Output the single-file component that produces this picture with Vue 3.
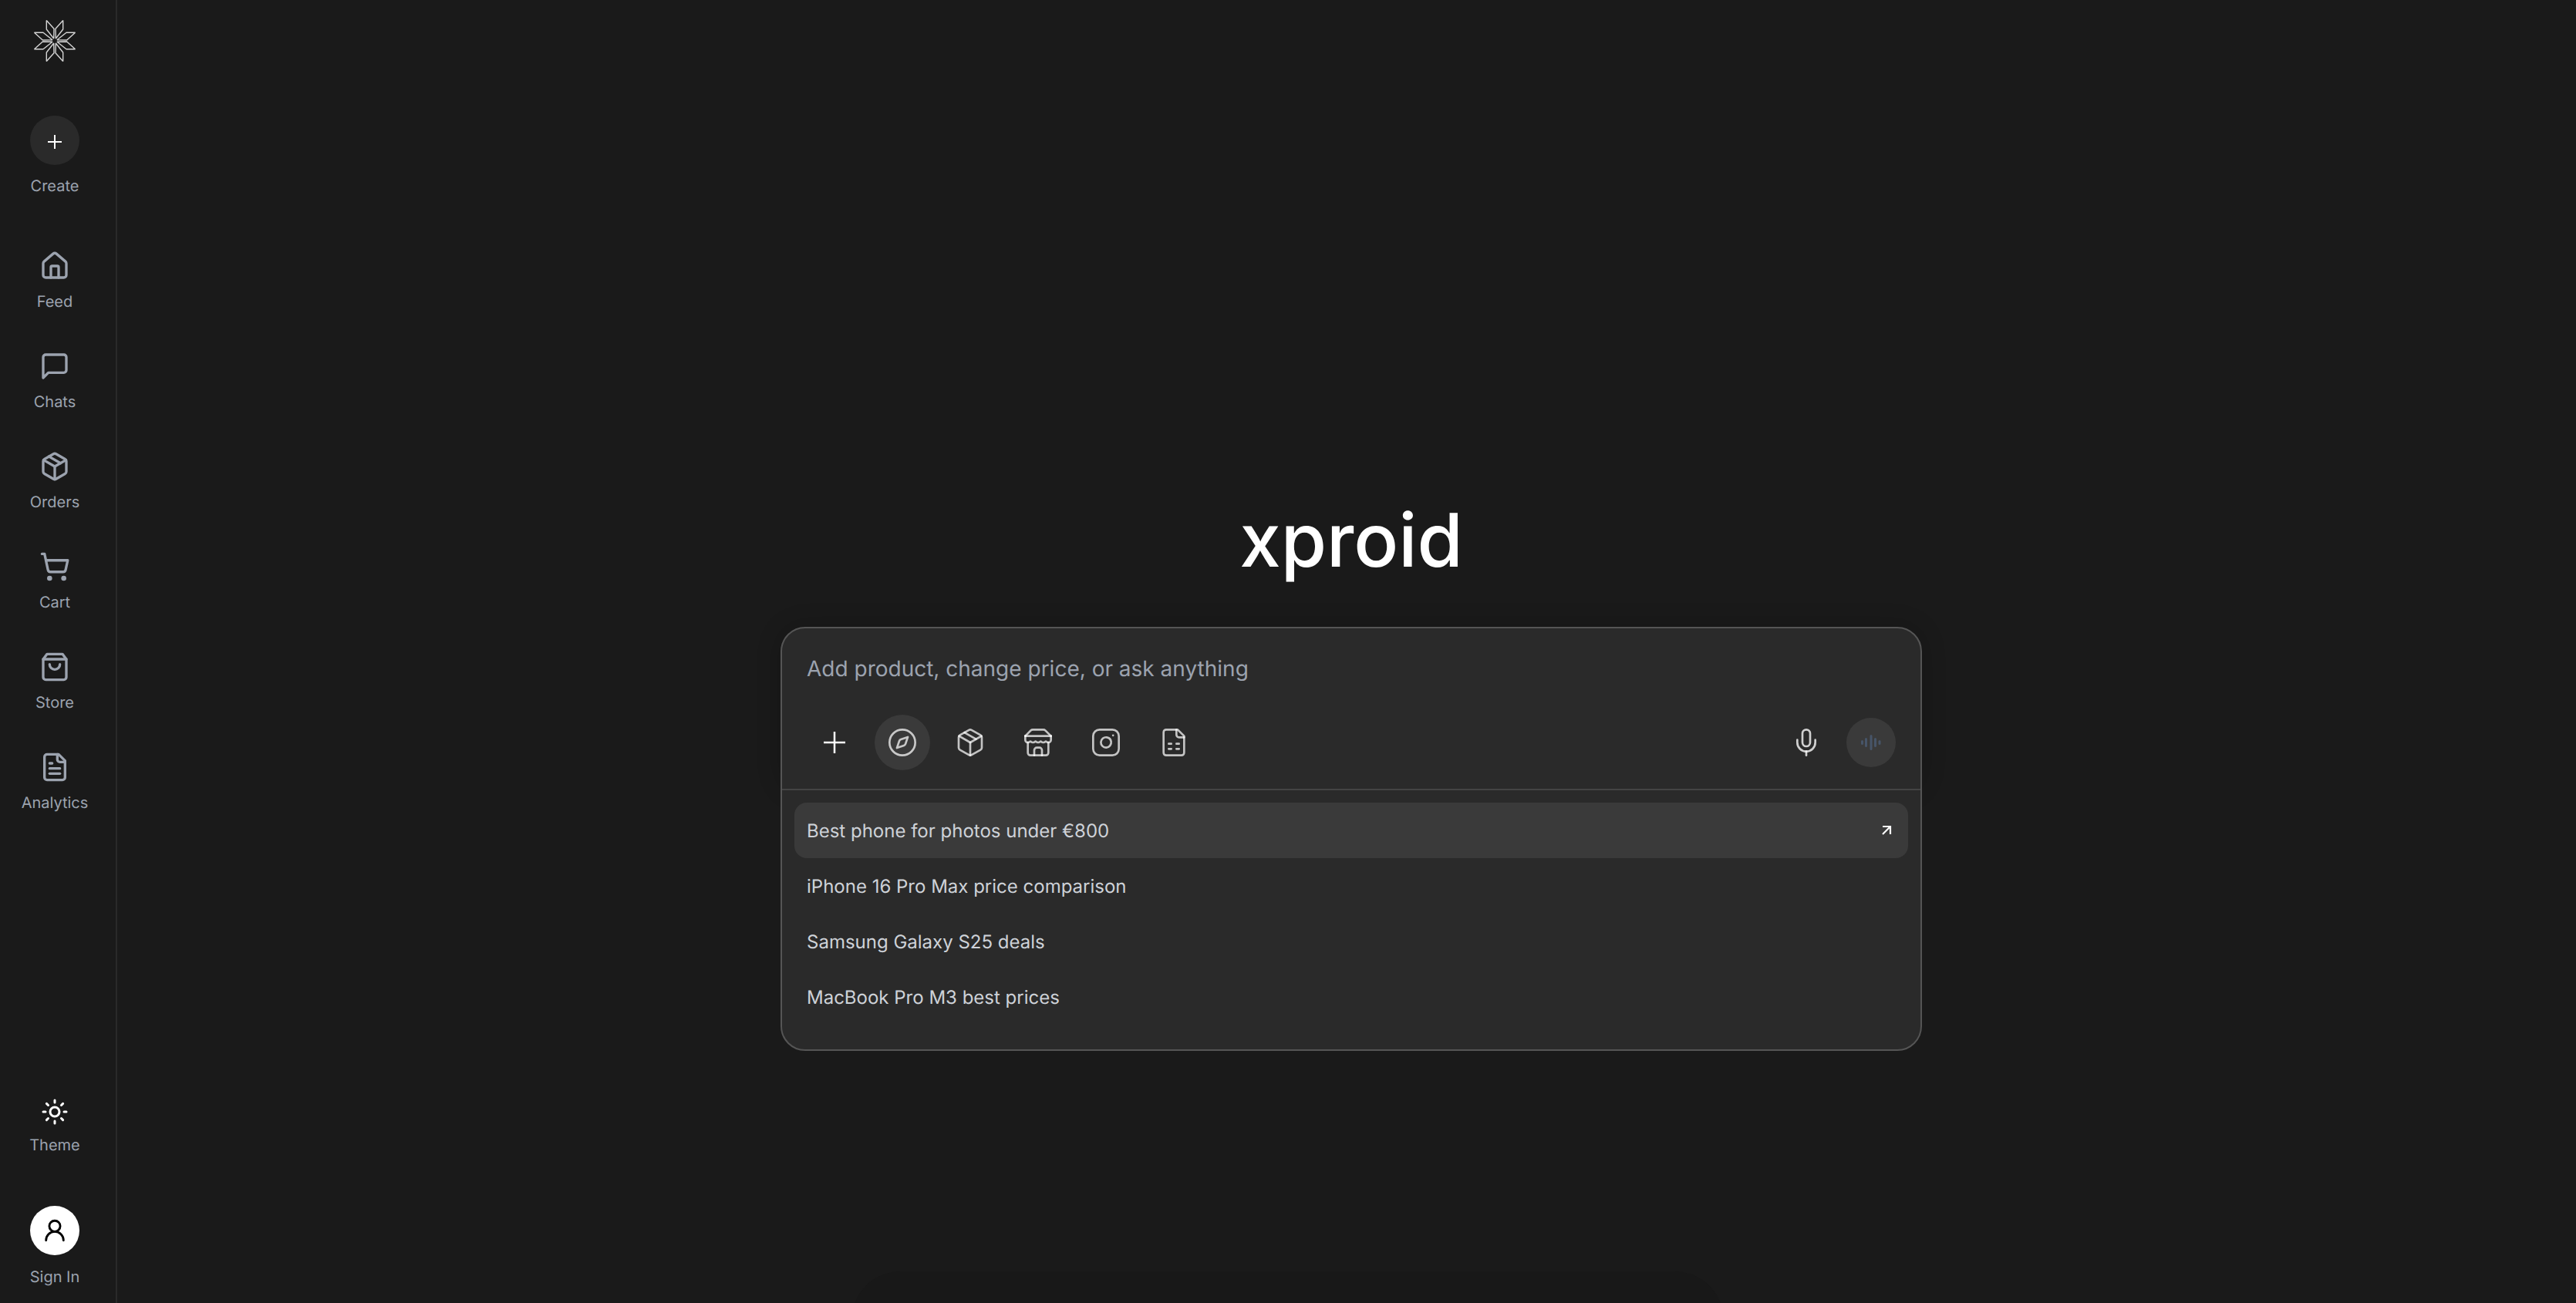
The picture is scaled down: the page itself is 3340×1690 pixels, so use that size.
<script setup>
const P = [[10.7, -26.5], [10.7, -15], [1.3, -3], [1, -15.7]]
const flips = [
  [1, 1, false], [-1, 1, false], [1, -1, false], [-1, -1, false],
  [1, 1, true], [-1, 1, true], [1, -1, true], [-1, -1, true],
]
const petals = flips.map(([sx, sy, swap]) =>
  P.map(([x, y]) => {
    const a = swap ? -y : x
    const b = swap ? -x : y
    return `${a * sx + 28},${b * sy + 28}`
  }).join(' ')
)

const house = ['M15 21v-8a1 1 0 0 0-1-1h-4a1 1 0 0 0-1 1v8', 'M3 10a2 2 0 0 1 .709-1.528l7-6a2 2 0 0 1 2.582 0l7 6A2 2 0 0 1 21 10v9a2 2 0 0 1-2 2H5a2 2 0 0 1-2-2z']
const box = ['M11 21.73a2 2 0 0 0 2 0l7-4A2 2 0 0 0 21 16V8a2 2 0 0 0-1-1.73l-7-4a2 2 0 0 0-2 0l-7 4A2 2 0 0 0 3 8v8a2 2 0 0 0 1 1.73z', 'M12 22V12', 'M3.29 7 12 12l8.71-5', 'm7.5 4.27 9 5.15']

const nav = [
  { label: 'Feed', paths: house },
  { label: 'Chats', paths: ['M21 15a2 2 0 0 1-2 2H7l-4 4V5a2 2 0 0 1 2-2h14a2 2 0 0 1 2 2z'] },
  { label: 'Orders', paths: box },
  { label: 'Cart', paths: ['M2.05 2.05h2l2.66 12.42a2 2 0 0 0 2 1.58h9.78a2 2 0 0 0 1.95-1.57l1.65-7.43H5.12', 'M9 21a1 1 0 1 1-2 0a1 1 0 1 1 2 0z', 'M20 21a1 1 0 1 1-2 0a1 1 0 1 1 2 0z'] },
  { label: 'Store', paths: ['M6 2 3 6v14a2 2 0 0 0 2 2h14a2 2 0 0 0 2-2V6l-3-4Z', 'M3 6h18', 'M16 10a4 4 0 0 1-8 0'] },
  { label: 'Analytics', paths: ['M15 2H6a2 2 0 0 0-2 2v16a2 2 0 0 0 2 2h12a2 2 0 0 0 2-2V7Z', 'M14 2v4a2 2 0 0 0 2 2h4', 'M10 9H8', 'M16 13H8', 'M16 17H8'] },
]

const tools = [
  { name: 'compass', active: true, paths: ['M22 12a10 10 0 1 1-20 0a10 10 0 1 1 20 0z', 'm16.24 7.76-1.804 5.411a2 2 0 0 1-1.265 1.265L7.76 16.24l1.804-5.411a2 2 0 0 1 1.265-1.265z'] },
  { name: 'package', paths: box },
  { name: 'store', paths: ['m2 7 4.41-4.41A2 2 0 0 1 7.83 2h8.34a2 2 0 0 1 1.42.59L22 7', 'M4 12v8a2 2 0 0 0 2 2h12a2 2 0 0 0 2-2v-8', 'M15 22v-4a2 2 0 0 0-2-2h-2a2 2 0 0 0-2 2v4', 'M2 7h20', 'M22 7v3a2 2 0 0 1-2 2a2.7 2.7 0 0 1-1.59-.63.7.7 0 0 0-.82 0A2.7 2.7 0 0 1 16 12a2.7 2.7 0 0 1-1.59-.63.7.7 0 0 0-.82 0A2.7 2.7 0 0 1 12 12a2.7 2.7 0 0 1-1.59-.63.7.7 0 0 0-.82 0A2.7 2.7 0 0 1 8 12a2.7 2.7 0 0 1-1.59-.63.7.7 0 0 0-.82 0A2.7 2.7 0 0 1 4 12a2 2 0 0 1-2-2V7'] },
  { name: 'instagram', paths: ['M7 2h10a5 5 0 0 1 5 5v10a5 5 0 0 1-5 5H7a5 5 0 0 1-5-5V7a5 5 0 0 1 5-5z', 'M16 11.37A4 4 0 1 1 12.63 8 4 4 0 0 1 16 11.37z', 'M17.5 6.5h.01'] },
  { name: 'sheet', paths: ['M15 2H6a2 2 0 0 0-2 2v16a2 2 0 0 0 2 2h12a2 2 0 0 0 2-2V7Z', 'M14 2v4a2 2 0 0 0 2 2h4', 'M8 13h2', 'M14 13h2', 'M8 17h2', 'M14 17h2'] },
]

const mic = ['M12 2a3 3 0 0 0-3 3v7a3 3 0 0 0 6 0V5a3 3 0 0 0-3-3Z', 'M19 10v2a7 7 0 0 1-14 0v-2', 'M12 19v3']
const sun = ['M16 12a4 4 0 1 1-8 0a4 4 0 1 1 8 0z', 'M12 2v2', 'M12 20v2', 'm4.93 4.93 1.41 1.41', 'm17.66 17.66 1.41 1.41', 'M2 12h2', 'M20 12h2', 'm6.34 17.66-1.41 1.41', 'm19.07 4.93-1.41 1.41']

const suggestions = [
  'Best phone for photos under €800',
  'iPhone 16 Pro Max price comparison',
  'Samsung Galaxy S25 deals',
  'MacBook Pro M3 best prices',
]
</script>

<template>
  <div class="app">
    <aside class="sidebar">
      <svg class="logo" viewBox="0 0 56 56" width="56" height="56" fill="none" stroke="#d4d4d4" stroke-width="1.4" stroke-linejoin="bevel">
        <polygon v-for="(p, i) in petals" :key="i" :points="p" />
      </svg>

      <div class="item create">
        <span class="round dark">
          <svg viewBox="0 0 20 20" width="20" height="20" fill="none" stroke="#fff" stroke-width="2"><path d="M10 1v18M1 10h18" /></svg>
        </span>
        <span class="label">Create</span>
      </div>

      <nav class="nav">
        <div v-for="n in nav" :key="n.label" class="item">
          <svg class="ico" viewBox="0 0 24 24" width="40" height="40" fill="none" stroke="#9ca3af" stroke-width="2" stroke-linecap="round" stroke-linejoin="round">
            <path v-for="d in n.paths" :key="d" :d="d" />
          </svg>
          <span class="label">{{ n.label }}</span>
        </div>
      </nav>

      <div class="bottom">
        <div class="item theme">
          <svg class="ico" viewBox="0 0 24 24" width="36" height="36" fill="none" stroke="#fff" stroke-width="2" stroke-linecap="round" stroke-linejoin="round">
            <path v-for="d in sun" :key="d" :d="d" />
          </svg>
          <span class="label">Theme</span>
        </div>
        <div class="item signin">
          <span class="round white">
            <svg viewBox="0 0 24 24" width="34" height="34" fill="none" stroke="#000" stroke-width="2" stroke-linecap="round" stroke-linejoin="round">
              <path d="M17 8a5 5 0 1 1-10 0a5 5 0 1 1 10 0z" />
              <path d="M20 21a8 8 0 0 0-16 0" />
            </svg>
          </span>
          <span class="label">Sign In</span>
        </div>
      </div>
    </aside>

    <main class="main">
      <h1 class="title">xproid</h1>
      <section class="card">
        <div class="placeholder">Add product, change price, or ask anything</div>
        <div class="toolbar">
          <button class="tool">
            <svg viewBox="0 0 28 28" width="28" height="28" fill="none" stroke="#fff" stroke-width="2.5"><path d="M14 0v28M0 14h28" /></svg>
          </button>
          <button v-for="t in tools" :key="t.name" class="tool" :class="{ active: t.active }">
            <svg viewBox="0 0 24 24" width="40" height="40" fill="none" stroke="#fff" stroke-opacity="0.72" stroke-width="1.6" stroke-linecap="round" stroke-linejoin="round">
              <path v-for="d in t.paths" :key="d" :d="d" />
            </svg>
          </button>
          <span class="spacer"></span>
          <button class="tool">
            <svg viewBox="0 0 24 24" width="40" height="40" fill="none" stroke="#fff" stroke-opacity="0.78" stroke-width="1.6" stroke-linecap="round" stroke-linejoin="round">
              <path v-for="d in mic" :key="d" :d="d" />
            </svg>
          </button>
          <button class="send">
            <svg viewBox="0 0 28 28" width="28" height="28" fill="none" stroke="#475569" stroke-width="3" stroke-linecap="round">
              <path d="M2.5 12.5v3M7.5 9.5v9M14 5.5v17M19.5 9.5v9M25 12.5v3" />
            </svg>
          </button>
        </div>
        <div class="suggestions">
          <div v-for="(s, i) in suggestions" :key="s" class="row" :class="{ hot: i === 0 }">
            <span>{{ s }}</span>
            <svg v-if="i === 0" viewBox="0 0 24 24" width="24" height="24" fill="none" stroke="#fff" stroke-width="2.2"><path d="M7 7h10v10M7 17 17 7" /></svg>
          </div>
        </div>
      </section>
      <div class="glow"></div>
    </main>
  </div>
</template>

<style>
html, body { margin: 0; background: #1a1a1a; overflow: hidden; }
</style>

<style scoped>
.app {
  display: flex;
  height: 1690px;
  background: #1a1a1a;
  font-family: Inter, "Liberation Sans", sans-serif;
  text-rendering: geometricPrecision;
  overflow: hidden;
}
.sidebar {
  width: 152px;
  box-sizing: border-box;
  border-right: 2px solid #2a2a2a;
  display: flex;
  flex-direction: column;
  align-items: center;
  padding-top: 25px;
  padding-right: 8px;
  flex: none;
}
.logo { display: block; }
.item {
  display: flex;
  flex-direction: column;
  align-items: center;
  gap: 11px;
}
.label {
  font-size: 20px;
  line-height: 30px;
  color: #9ca3af;
}
.create { margin-top: 69px; gap: 12px; }
.round {
  width: 64px;
  height: 64px;
  border-radius: 50%;
  display: flex;
  align-items: center;
  justify-content: center;
}
.dark { background: #2a2a2a; }
.white { background: #fff; }
.create .round svg { margin-top: 4px; }
.nav {
  margin-top: 69px;
  display: flex;
  flex-direction: column;
  gap: 49px;
}
.ico { display: block; }
.bottom {
  margin-top: auto;
  display: flex;
  flex-direction: column;
  align-items: center;
  padding-bottom: 19px;
}
.theme { gap: 10px; }
.signin { margin-top: 64px; gap: 13px; }
.main {
  flex: 1;
  position: relative;
  isolation: isolate;
  display: flex;
  flex-direction: column;
  align-items: center;
  padding-left: 12px;
  padding-top: 644px;
}
.title {
  margin: 0 0 54px;
  font-size: 96px;
  line-height: 115px;
  font-weight: 500;
  color: #fff;
}
.card {
  width: 1480px;
  box-sizing: border-box;
  background: #2a2a2a;
  border: 2px solid #555;
  border-radius: 32px;
  position: relative;
}
.card::before {
  content: "";
  position: absolute;
  left: -2px;
  right: -2px;
  top: -2px;
  height: 214px;
  border-radius: 32px;
  box-shadow: 0 0 32px rgba(0, 0, 0, 0.2);
  z-index: -1;
}
.placeholder {
  padding: 32px 32px 0;
  font-size: 28px;
  line-height: 40px;
  color: #9ca3af;
}
.toolbar {
  display: flex;
  align-items: center;
  gap: 16px;
  padding: 40px 32px 24px;
  border-bottom: 2px solid #444;
}
.tool, .send {
  border: 0;
  padding: 0;
  background: transparent;
  display: flex;
  align-items: center;
  justify-content: center;
  border-radius: 50%;
  flex: none;
}
.tool { width: 72px; height: 72px; }
.tool.active { background: #3a3a3a; }
.send { width: 64px; height: 64px; background: #3a3a3a; }
.spacer { flex: 1; }
.suggestions { padding: 16px 16px 32px; }
.row {
  height: 72px;
  box-sizing: border-box;
  padding: 0 16px;
  display: flex;
  align-items: center;
  justify-content: space-between;
  border-radius: 16px;
  font-size: 24px;
  color: #ced2d8;
}
.row.hot { background: #3a3a3a; }
.glow {
  position: absolute;
  left: 952px;
  top: 1649px;
  width: 1131px;
  height: 80px;
  background: #181818;
  border-radius: 64px 64px 0 0;
}
</style>
